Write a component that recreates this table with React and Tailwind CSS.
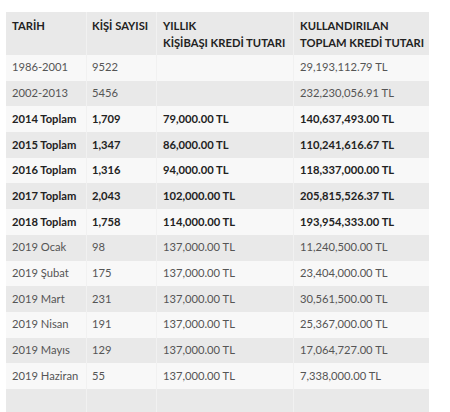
import React from "react";

const rows = [
  { a: "1986-2001", b: "9522", c: "", d: "29,193,112.79 TL", bold: false },
  { a: "2002-2013", b: "5456", c: "", d: "232,230,056.91 TL", bold: false },
  { a: "2014 Toplam", b: "1,709", c: "79,000.00 TL", d: "140,637,493.00 TL", bold: true },
  { a: "2015 Toplam", b: "1,347", c: "86,000.00 TL", d: "110,241,616.67 TL", bold: true },
  { a: "2016 Toplam", b: "1,316", c: "94,000.00 TL", d: "118,337,000.00 TL", bold: true },
  { a: "2017 Toplam", b: "2,043", c: "102,000.00 TL", d: "205,815,526.37 TL", bold: true },
  { a: "2018 Toplam", b: "1,758", c: "114,000.00 TL", d: "193,954,333.00 TL", bold: true },
  { a: "2019 Ocak", b: "98", c: "137,000.00 TL", d: "11,240,500.00 TL", bold: false },
  { a: "2019 Şubat", b: "175", c: "137,000.00 TL", d: "23,404,000.00 TL", bold: false },
  { a: "2019 Mart", b: "231", c: "137,000.00 TL", d: "30,561,500.00 TL", bold: false },
  { a: "2019 Nisan", b: "191", c: "137,000.00 TL", d: "25,367,000.00 TL", bold: false },
  { a: "2019 Mayıs", b: "129", c: "137,000.00 TL", d: "17,064,727.00 TL", bold: false },
  { a: "2019 Haziran", b: "55", c: "137,000.00 TL", d: "7,338,000.00 TL", bold: false },
];

function Cell({ children, last }) {
  return (
    <div className={"flex items-center pl-[6px] whitespace-nowrap " + (last ? "" : "border-r border-[#f1f1f1]")}>
      {children}
    </div>
  );
}

export default function App() {
  return (
    <div className="w-[450px] h-[412px] bg-white overflow-hidden pt-[12px] pl-[6px] font-['Lato',sans-serif] text-[11.2px]">
      <div className="w-[423px] flex flex-col">
        <div className="grid grid-cols-[81px_70px_137px_135px] h-[43px] bg-[#e9e9e9] text-[#222] font-bold leading-[16.5px]">
          <div className="pl-[6px] pt-[6px] border-r border-[#f1f1f1]">TARİH</div>
          <div className="pl-[5px] pt-[6px] border-r border-[#f1f1f1] whitespace-nowrap">KİŞİ SAYISI</div>
          <div className="pl-[6px] pt-[6px] border-r border-[#f1f1f1] whitespace-nowrap">
            YILLIK
            <br />
            KİŞİBAŞI KREDİ TUTARI
          </div>
          <div className="pl-[6px] pt-[6px] whitespace-nowrap">
            KULLANDIRILAN
            <br />
            TOPLAM KREDİ TUTARI
          </div>
        </div>
        {rows.map((r, i) => (
          <div
            key={i}
            className={
              "grid grid-cols-[81px_70px_137px_135px] h-[25.7px] " +
              (i % 2 === 0 ? "bg-[#f8f8f8] " : "bg-[#e9e9e9] ") +
              (r.bold ? "font-bold text-[#222]" : "text-[#555]")
            }
          >
            <Cell>{r.a}</Cell>
            <div className="flex items-center pl-[5px] whitespace-nowrap border-r border-[#f1f1f1]">{r.b}</div>
            <Cell>{r.c}</Cell>
            <Cell last>{r.d}</Cell>
          </div>
        ))}
        <div className="grid grid-cols-[81px_70px_137px_135px] h-[40px] bg-[#e9e9e9]">
          <div className="border-r border-[#f1f1f1]" />
          <div className="border-r border-[#f1f1f1]" />
          <div className="border-r border-[#f1f1f1]" />
          <div />
        </div>
      </div>
    </div>
  );
}
